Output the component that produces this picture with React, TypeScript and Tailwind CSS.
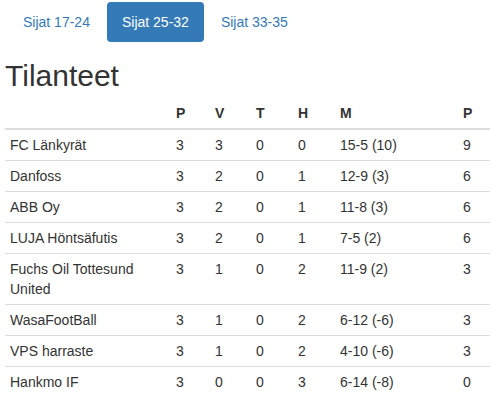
import React from 'react';

const rows = [
  ['FC Länkyrät', '3', '3', '0', '0', '15-5 (10)', '9'],
  ['Danfoss', '3', '2', '0', '1', '12-9 (3)', '6'],
  ['ABB Oy', '3', '2', '0', '1', '11-8 (3)', '6'],
  ['LUJA Höntsäfutis', '3', '2', '0', '1', '7-5 (2)', '6'],
  ['Fuchs Oil Tottesund United', '3', '1', '0', '2', '11-9 (2)', '3'],
  ['WasaFootBall', '3', '1', '0', '2', '6-12 (-6)', '3'],
  ['VPS harraste', '3', '1', '0', '2', '4-10 (-6)', '3'],
  ['Hankmo IF', '3', '0', '0', '3', '6-14 (-8)', '0'],
];

const tabs = ['Sijat 17-24', 'Sijat 25-32', 'Sijat 33-35'];

export default function App() {
  return (
    <div className="w-[490px] h-[404px] overflow-hidden bg-white text-[14px] leading-[20px] text-[#333] font-['Liberation_Sans',Arial,sans-serif]">
      {/* Pills */}
      <ul className="flex gap-[2px] pl-[8px] pt-[2px]">
        {tabs.map((t, i) => (
          <li key={t}>
            <a
              className={`block px-[15px] py-[10px] rounded-[4px] ${
                i === 1 ? 'bg-[#337ab7] text-white' : 'text-[#337ab7]'
              }`}
            >
              {t}
            </a>
          </li>
        ))}
      </ul>

      <div className="pl-[5px]">
        <h2 className="mt-[17px] mb-[6px] text-[30px] leading-[33px] font-medium">Tilanteet</h2>

        <table className="w-[485px] table-fixed border-collapse">
          <colgroup>
            <col className="w-[166px]" />
            <col className="w-[39px]" />
            <col className="w-[41px]" />
            <col className="w-[42px]" />
            <col className="w-[42px]" />
            <col className="w-[123px]" />
            <col className="w-[32px]" />
          </colgroup>
          <thead>
            <tr className="border-b-2 border-[#ddd]">
              <th className="p-[5px]"></th>
              {['P', 'V', 'T', 'H', 'M', 'P'].map((h, i) => (
                <th key={i} className="p-[5px] text-left font-bold align-bottom">
                  {h}
                </th>
              ))}
            </tr>
          </thead>
          <tbody>
            {rows.map((r, ri) => (
              <tr key={r[0]} className={ri > 0 ? 'border-t border-[#ddd]' : ''}>
                {r.map((c, ci) => (
                  <td key={ci} className="p-[5px] align-top">
                    {c}
                  </td>
                ))}
              </tr>
            ))}
          </tbody>
        </table>
      </div>
    </div>
  );
}
